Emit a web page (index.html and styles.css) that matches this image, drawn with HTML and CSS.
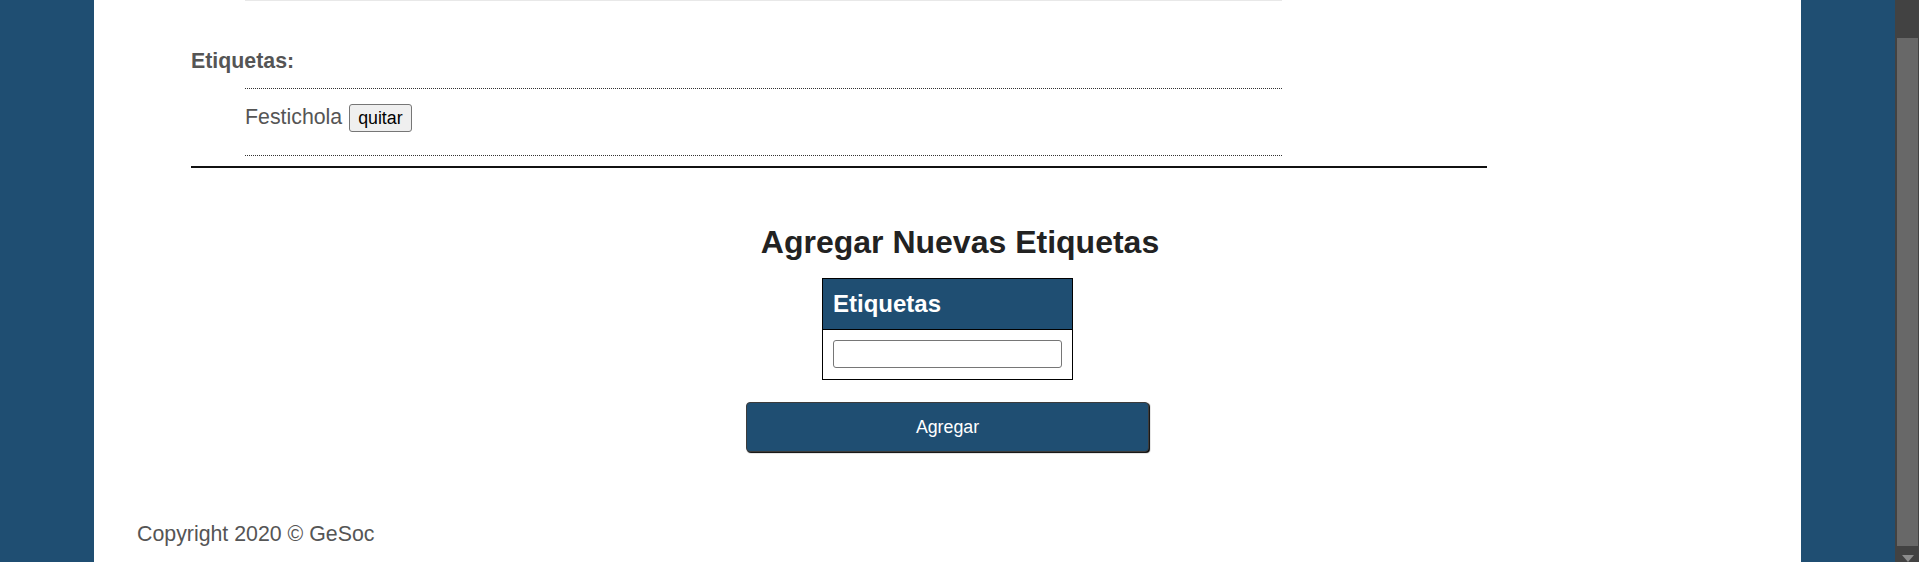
FILE: index.html
```html
<!DOCTYPE html>
<html lang="es">
<head>
<meta charset="utf-8">
<title>GeSoc - Etiquetas</title>
<link rel="stylesheet" href="styles.css">
</head>
<body>
  <div class="viewport">
    <div class="page">
      <section class="tags">
        <div class="prev-line"></div>
        <h3 class="tags-title">Etiquetas:</h3>
        <ul class="tag-list">
          <li class="tag-item">Festichola <button class="btn-quitar" type="button">quitar</button></li>
        </ul>
        <hr class="divider">
      </section>

      <section class="add">
        <h2 class="add-title">Agregar Nuevas Etiquetas</h2>
        <table class="add-table">
          <thead>
            <tr><th>Etiquetas</th></tr>
          </thead>
          <tbody>
            <tr><td><input class="tag-input" type="text"></td></tr>
          </tbody>
        </table>
        <button class="btn-agregar" type="button">Agregar</button>
      </section>

      <footer class="footer">Copyright 2020 © GeSoc</footer>
    </div>
  </div>
  <aside class="scrollbar">
    <div class="scroll-thumb"></div>
    <div class="scroll-arrow"><span class="arrow-down"></span></div>
  </aside>
</body>
</html>
```

FILE: styles.css
```css
html, body {
  margin: 0;
  padding: 0;
}

body {
  display: flex;
  height: 562px;
  overflow: hidden;
  background: #1f4e72;
  font-family: "Liberation Sans", Arial, sans-serif;
  font-size: 21.33px;
  line-height: 24px;
  color: #555;
}

.viewport {
  flex: 1;
  min-width: 0;
}

.page {
  width: 1707px;
  height: 100%;
  margin: 0 auto;
  background: #fff;
}

/* ---- existing tags ---- */
.tags {
  padding-left: 97px;
}

.prev-line {
  height: 1px;
  width: 1037px;
  margin-left: 54px;
  background: #e8e8e8;
}

.tags-title {
  margin: 48px 0 0;
  font-size: 21.33px;
  line-height: 24px;
  font-weight: bold;
  color: #555;
}

.tag-list {
  list-style: none;
  margin: 15px 0 0 54px;
  padding: 0;
  width: 1037px;
  border-top: 1px dotted #333;
  border-bottom: 1px dotted #333;
}

.tag-item {
  padding: 15px 0 23px;
  line-height: 24px;
  color: #555;
}

.btn-quitar {
  height: 28px;
  padding: 0 8px;
  margin-left: 1px;
  border: 1px solid #767676;
  border-radius: 3px;
  background: #efefef;
  color: #000;
  font-family: "Liberation Sans", Arial, sans-serif;
  font-size: 17.78px;
  line-height: 26px;
}

.divider {
  width: 1296px;
  height: 0;
  margin: 10px 0 0;
  border: 0;
  border-top: 2px solid #111;
}

/* ---- add new tags ---- */
.add {
  display: flex;
  flex-direction: column;
  align-items: center;
}

.add-title {
  margin: 56px 0 0;
  padding-left: 25px;
  font-size: 32px;
  line-height: 37px;
  font-weight: bold;
  color: #222;
}

.add-table {
  margin-top: 17px;
  border-collapse: collapse;
  border: 1px solid #000;
}

.add-table th {
  padding: 11px 10px 12px;
  background: #1f4e72;
  color: #fff;
  text-align: left;
  font-size: 24px;
  line-height: 27px;
  font-weight: bold;
  border: 1px solid #000;
}

.add-table td {
  padding: 10px 10px 11px;
  border: 1px solid #000;
}

.tag-input {
  display: block;
  box-sizing: border-box;
  width: 229px;
  height: 28px;
  margin: 0;
  border: 1px solid #767676;
  border-radius: 3px;
  background: #fff;
}

.btn-agregar {
  box-sizing: border-box;
  width: 403px;
  height: 50px;
  margin-top: 22px;
  border: 1px solid #3c3c3c;
  border-radius: 4px;
  box-shadow: 1px 1px 1px #000;
  background: #1f4e72;
  color: #fff;
  font-family: "Liberation Sans", Arial, sans-serif;
  font-size: 17.78px;
}

/* ---- footer ---- */
.footer {
  margin-top: 70px;
  padding-left: 43px;
  font-size: 21.33px;
  line-height: 24px;
  color: #555;
}

/* ---- fake scrollbar ---- */
.scrollbar {
  width: 24px;
  flex: none;
  display: flex;
  flex-direction: column;
  padding-top: 38px;
  box-sizing: border-box;
  background: #424242;
}

.scroll-thumb {
  height: 509px;
  margin-left: 2px;
  width: 21px;
  background: #686868;
}

.scroll-arrow {
  display: flex;
  justify-content: center;
  padding-top: 9px;
  padding-left: 1px;
}

.arrow-down {
  width: 0;
  height: 0;
  border-left: 6px solid transparent;
  border-right: 6px solid transparent;
  border-top: 7px solid #8c8c8c;
}
```
